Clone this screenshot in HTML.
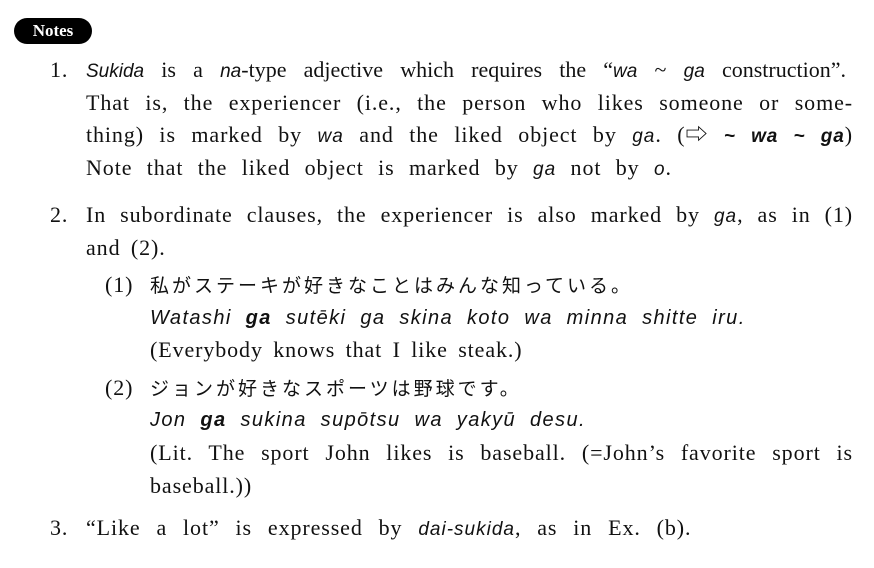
<!DOCTYPE html>
<html><head><meta charset="utf-8"><style>
body{margin:0;background:#fff;width:874px;height:568px;position:relative;overflow:hidden;color:#111;font-family:"Liberation Serif","Noto Serif CJK SC",serif;font-size:22px;letter-spacing:0.9px}
.l{position:absolute;line-height:24px;white-space:nowrap}
.j{text-align:justify;text-align-last:justify;white-space:normal}
i.s{font-family:"Liberation Sans",sans-serif;font-style:italic;font-size:19px;letter-spacing:1px}
b.s{font-family:"Liberation Sans",sans-serif;font-style:italic;font-weight:bold;font-size:19px}
.it{font-family:"Liberation Sans",sans-serif;font-style:italic;font-size:20px;letter-spacing:1.4px;word-spacing:7px}
.jp{font-family:"Noto Sans CJK JP",sans-serif;font-size:19px;letter-spacing:3px}
.tag{position:absolute;left:14px;top:18px;width:78px;height:26px;background:#000;border-radius:13px;color:#fff;font-weight:bold;font-size:17px;letter-spacing:0;line-height:26px;text-align:center}
</style></head><body>
<div class="tag">Notes</div>
<div class="l" style="left:50px;top:58px">1.</div>
<div class="l j" style="left:86px;top:58px;width:760px;letter-spacing:0"><i class="s" style="letter-spacing:0">Sukida</i> is a <i class="s" style="letter-spacing:0">na</i>-type adjective which requires the “<i class="s" style="letter-spacing:0">wa</i> ~ <i class="s" style="letter-spacing:0">ga</i> construction”.</div>
<div class="l j" style="left:86px;top:91px;width:767px">That is, the experiencer (i.e., the person who likes someone or some-</div>
<div class="l j" style="left:86px;top:123px;width:767px">thing) is marked by <i class="s">wa</i> and the liked object by <i class="s">ga</i>. (⇨ <b class="s">~ wa ~ ga</b>)</div>
<div class="l" style="left:86px;top:156px;word-spacing:8px">Note that the liked object is marked by <i class="s">ga</i> not by <i class="s">o</i>.</div>
<div class="l" style="left:50px;top:203px">2.</div>
<div class="l j" style="left:86px;top:203px;width:767px">In subordinate clauses, the experiencer is also marked by <i class="s">ga</i>, as in (1)</div>
<div class="l" style="left:86px;top:236px;word-spacing:4px">and (2).</div>
<div class="l" style="left:105px;top:273px">(1)</div>
<div class="l jp" style="left:150px;top:273px">私がステーキが好きなことはみんな知っている。</div>
<div class="l it" style="left:150px;top:306px">Watashi <b>ga</b> sutēki ga skina koto wa minna shitte iru.</div>
<div class="l" style="left:150px;top:338px;word-spacing:4px">(Everybody knows that I like steak.)</div>
<div class="l" style="left:105px;top:376px">(2)</div>
<div class="l jp" style="left:150px;top:376px">ジョンが好きなスポーツは野球です。</div>
<div class="l it" style="left:150px;top:408px">Jon <b>ga</b> sukina supōtsu wa yakyū desu.</div>
<div class="l j" style="left:150px;top:441px;width:703px">(Lit. The sport John likes is baseball. (=John’s favorite sport is</div>
<div class="l" style="left:150px;top:474px">baseball.))</div>
<div class="l" style="left:50px;top:516px">3.</div>
<div class="l" style="left:86px;top:516px;word-spacing:9.5px">“Like a lot” is expressed by <i class="s">dai-sukida</i>, as in Ex. (b).</div>
</body></html>
